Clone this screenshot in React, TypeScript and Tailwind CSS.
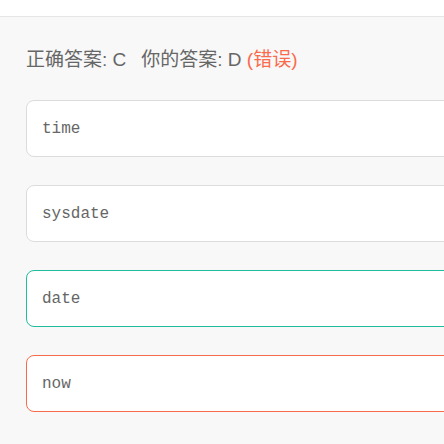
const options = [
  { text: 'time', state: 'normal' },
  { text: 'sysdate', state: 'normal' },
  { text: 'date', state: 'correct' },
  { text: 'now', state: 'wrong' },
] as const

const borderFor = {
  normal: 'border-[#dcdcdc]',
  correct: 'border-[#1fbd9b]',
  wrong: 'border-[#f96a4b]',
}

export default function App() {
  return (
    <div className="h-[444px] w-[444px] overflow-hidden bg-[#f8f8f8] font-['Liberation_Sans','Noto_Sans_CJK_SC',sans-serif]">
      <div className="h-[17px] border-b border-[#e6e6e6] bg-white" />
      <div className="pl-[26px] pt-[31px]">
        <p className="text-[19px] leading-[24px] text-[#666]">
          正确答案: C<span className="ml-[15px]">你的答案: D</span>{' '}
          <span className="text-[#fa6a4c]">(错误)</span>
        </p>
        <div className="mt-[28px] flex flex-col gap-[28px]">
          {options.map((o) => (
            <div
              key={o.text}
              className={`-mr-4 flex h-[57px] items-center rounded-[8px] border bg-white pl-[15px] ${borderFor[o.state]}`}
            >
              <span className="font-['Liberation_Mono',monospace] text-[16px] text-[#666]">{o.text}</span>
            </div>
          ))}
        </div>
      </div>
    </div>
  )
}
